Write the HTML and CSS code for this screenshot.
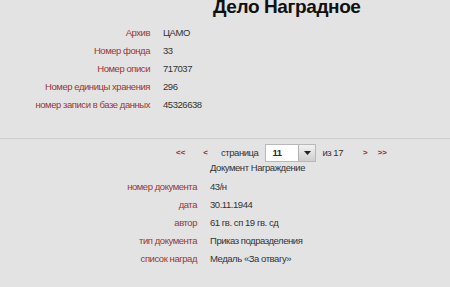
FILE: index.html
```html
<!DOCTYPE html>
<html lang="ru">
<head>
  <meta charset="UTF-8">
  <title>Дело Наградное</title>
  <link rel="stylesheet" href="styles.css">
</head>
<body>
  <div class="case">
    <h1 class="case-title">Дело Наградное</h1>
    <table class="info-table">
      <tr><td class="label">Архив</td><td class="value">ЦАМО</td></tr>
      <tr><td class="label">Номер фонда</td><td class="value">33</td></tr>
      <tr><td class="label">Номер описи</td><td class="value">717037</td></tr>
      <tr><td class="label">Номер единицы хранения</td><td class="value">296</td></tr>
      <tr><td class="label">номер записи в базе данных</td><td class="value">45326638</td></tr>
    </table>
  </div>

  <div class="document">
    <div class="pager">
      <a class="pager-link first" href="#">&lt;&lt;</a>
      <a class="pager-link prev" href="#">&lt;</a>
      <span class="pager-text">страница</span>
      <div class="page-select">
        <span class="page-value">11</span>
        <span class="page-arrow">
          <svg width="7" height="4" viewBox="0 0 7 4"><path d="M0 0h7L3.5 4z" fill="#222"/></svg>
        </span>
      </div>
      <span class="pager-text total">из 17</span>
      <a class="pager-link next" href="#">&gt;</a>
      <a class="pager-link" href="#">&gt;&gt;</a>
    </div>
    <div class="doc-heading">Документ Награждение</div>
    <table class="info-table doc-table">
      <tr><td class="label">номер документа</td><td class="value">43/н</td></tr>
      <tr><td class="label">дата</td><td class="value">30.11.1944</td></tr>
      <tr><td class="label">автор</td><td class="value">61 гв. сп 19 гв. сд</td></tr>
      <tr><td class="label">тип документа</td><td class="value">Приказ подразделения</td></tr>
      <tr><td class="label">список наград</td><td class="value">Медаль «За отвагу»</td></tr>
    </table>
  </div>
</body>
</html>
```

FILE: styles.css
```css
body {
  margin: 0;
  background-color: #e3e3e3;
  font-family: "Liberation Sans", Arial, sans-serif;
  font-size: 9.5px;
  letter-spacing: -0.45px;
  color: #333;
}

.case {
  padding-bottom: 25px;
  border-bottom: 1px solid #cfcfcf;
}

.case-title {
  margin: -5px 0 0 213px;
  font-size: 19px;
  letter-spacing: -0.4px;
  line-height: 24px;
  font-weight: bold;
  color: #111;
}

.info-table {
  border-collapse: collapse;
  margin-top: 4px;
}

.info-table td {
  height: 18px;
  padding: 0;
  vertical-align: middle;
}

.info-table .label {
  width: 150px;
  padding-right: 13px;
  text-align: right;
  color: #9b3535;
  white-space: nowrap;
}

.info-table .value {
  color: #333;
}

.document {
  padding-top: 4px;
}

.pager {
  display: flex;
  align-items: center;
  height: 19px;
  margin-left: 176px;
}

.pager-link {
  color: #a02828;
  font-weight: bold;
  font-size: 8px;
  letter-spacing: 0;
  text-decoration: none;
}

.pager-link.first {
  margin-right: 18px;
}

.pager-link.prev {
  margin-right: 13px;
}

.pager-link.next {
  margin-right: 10px;
}

.pager-text {
  margin-right: 7px;
}

.pager-text.total {
  margin-right: 20px;
}

.page-select {
  display: flex;
  width: 49px;
  height: 16px;
  margin-right: 6px;
  border: 1px solid #b8b8b8;
  background-color: #fff;
}

.page-value {
  flex: 1;
  padding-left: 6px;
  line-height: 16px;
  font-weight: bold;
  color: #1e2b3a;
}

.page-arrow {
  display: flex;
  align-items: center;
  justify-content: center;
  width: 16px;
  border-left: 1px solid #b0b0b0;
  background: linear-gradient(#f2f2f2, #cfcfcf);
}

.doc-heading {
  margin: 0 0 0 210px;
  line-height: 11px;
}

.doc-table {
  margin-top: 4px;
  margin-left: 47px;
}
```
